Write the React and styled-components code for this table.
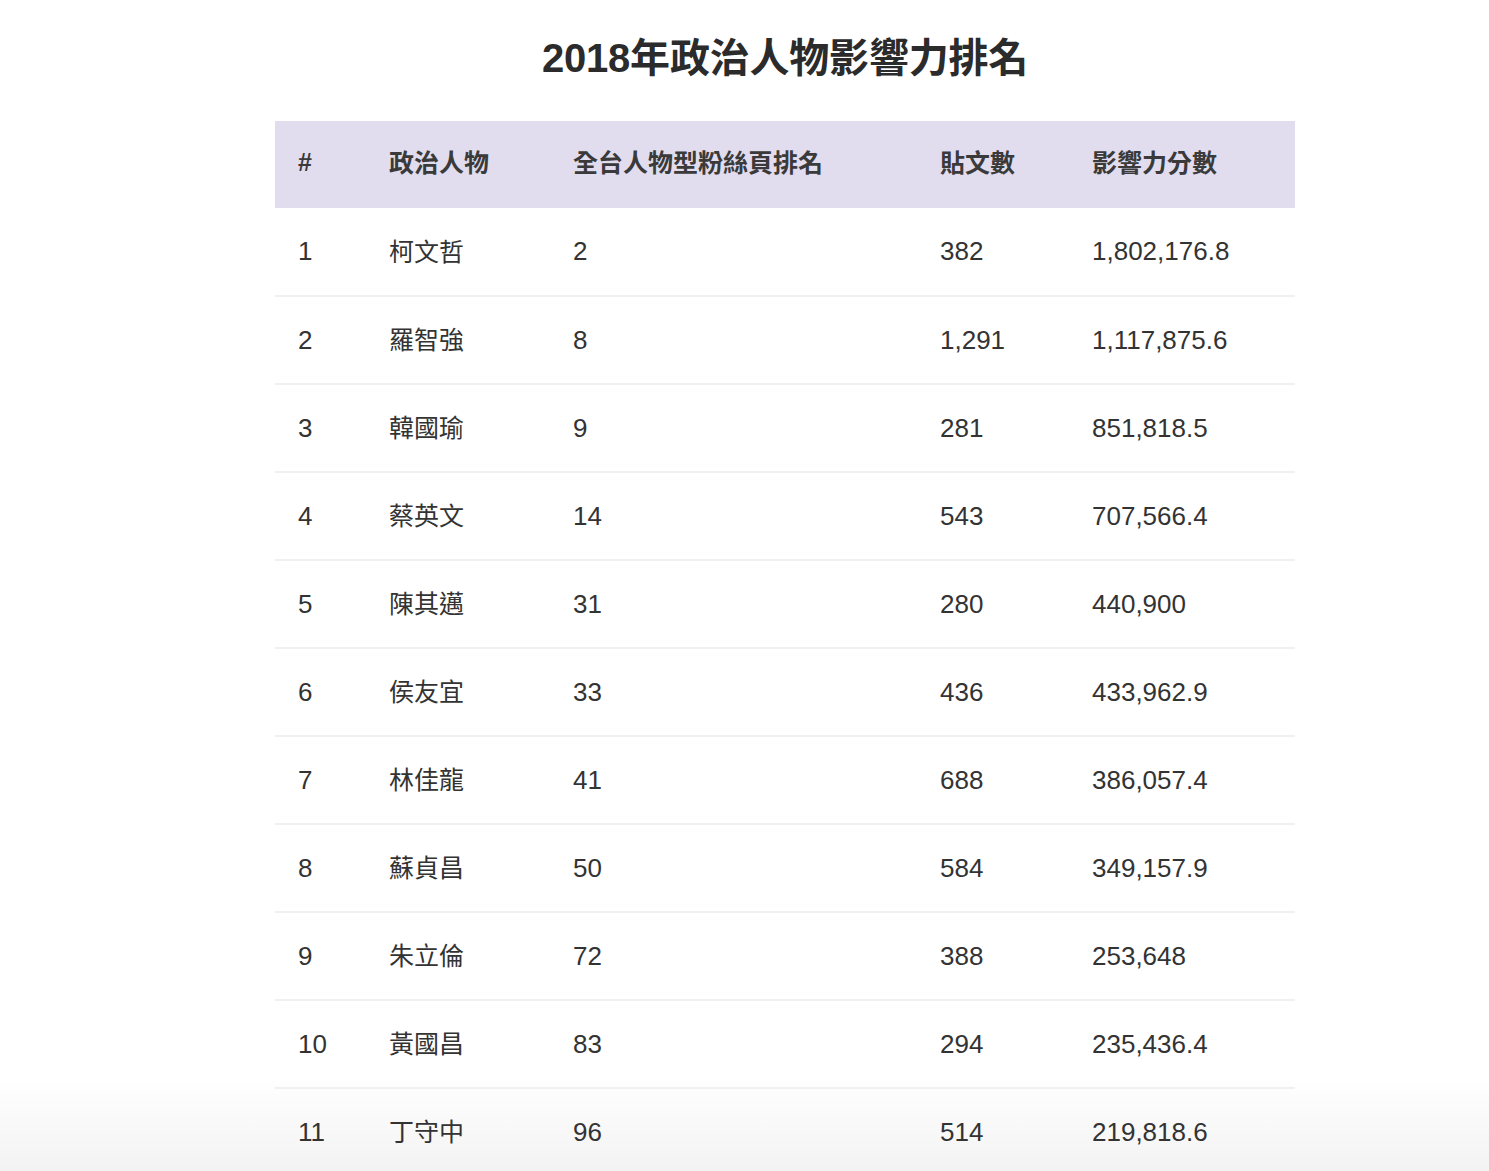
import React from 'react';
import styled, { createGlobalStyle } from 'styled-components';

const GlobalStyle = createGlobalStyle`
	html, body {
		margin: 0;
		padding: 0;
		background: #fff;
	}
	body {
		font-family: "Liberation Sans", "Noto Sans CJK TC", sans-serif;
		color: #333;
		overflow: hidden;
	}
`;

const Page = styled.div`
	width: 1489px;
	height: 1171px;
	overflow: hidden;
	background: linear-gradient(to bottom, #fff calc(100% - 95px), #f3f3f3 100%);
`;

const Container = styled.div`
	width: 1020px;
	margin-left: 275px;
`;

const Title = styled.h1`
	margin: 0;
	padding-top: 33px;
	height: 121px;
	box-sizing: border-box;
	text-align: center;
	font-size: 40px;
	font-weight: 700;
	line-height: 50px;
	color: #2b2b2b;
	letter-spacing: -0.2px;
`;

const Table = styled.table`
	width: 1020px;
	border-collapse: collapse;
	table-layout: fixed;
`;

const HeadRow = styled.tr`
	background: #e1ddef;
	height: 87px;
`;

const Th = styled.th`
	padding: 0 0 ${(p) => (p.cjk ? '8px' : '4px')} 23px;
	text-align: left;
	font-family: ${(p) => (p.cjk ? '"Noto Sans CJK TC", sans-serif' : 'inherit')};
	font-size: 25px;
	font-weight: 700;
	color: #3a3a3a;
`;

const Row = styled.tr`
	height: 88px;
	border-bottom: 2px solid #f0f0f0;
`;

const Td = styled.td`
	padding: 0 0 ${(p) => (p.cjk ? '4px' : '0')} 23px;
	font-family: ${(p) => (p.cjk ? '"Noto Sans CJK TC", sans-serif' : 'inherit')};
	font-size: ${(p) => (p.cjk ? '25px' : '26px')};
	color: #333;
	white-space: nowrap;
`;

const columns = [
	{ label: '#', w: 91 },
	{ label: '政治人物', w: 184, cjk: true },
	{ label: '全台人物型粉絲頁排名', w: 367, cjk: true },
	{ label: '貼文數', w: 152, cjk: true },
	{ label: '影響力分數', w: 226, cjk: true }
];

const data = [
	[1, '柯文哲', 2, '382', '1,802,176.8'],
	[2, '羅智強', 8, '1,291', '1,117,875.6'],
	[3, '韓國瑜', 9, '281', '851,818.5'],
	[4, '蔡英文', 14, '543', '707,566.4'],
	[5, '陳其邁', 31, '280', '440,900'],
	[6, '侯友宜', 33, '436', '433,962.9'],
	[7, '林佳龍', 41, '688', '386,057.4'],
	[8, '蘇貞昌', 50, '584', '349,157.9'],
	[9, '朱立倫', 72, '388', '253,648'],
	[10, '黃國昌', 83, '294', '235,436.4'],
	[11, '丁守中', 96, '514', '219,818.6']
];

export default function App() {
	return (
		<Page>
			<GlobalStyle />
			<Container>
				<Title>2018年政治人物影響力排名</Title>
				<Table>
					<colgroup>
						{columns.map((c) => (
							<col key={c.label} style={{ width: c.w }} />
						))}
					</colgroup>
					<thead>
						<HeadRow>
							{columns.map((c) => (
								<Th key={c.label} cjk={c.cjk}>
									{c.label}
								</Th>
							))}
						</HeadRow>
					</thead>
					<tbody>
						{data.map((r) => (
							<Row key={r[0]}>
								{r.map((cell, i) => (
									<Td key={i} cjk={i === 1}>
										{cell}
									</Td>
								))}
							</Row>
						))}
					</tbody>
				</Table>
			</Container>
		</Page>
	);
}
